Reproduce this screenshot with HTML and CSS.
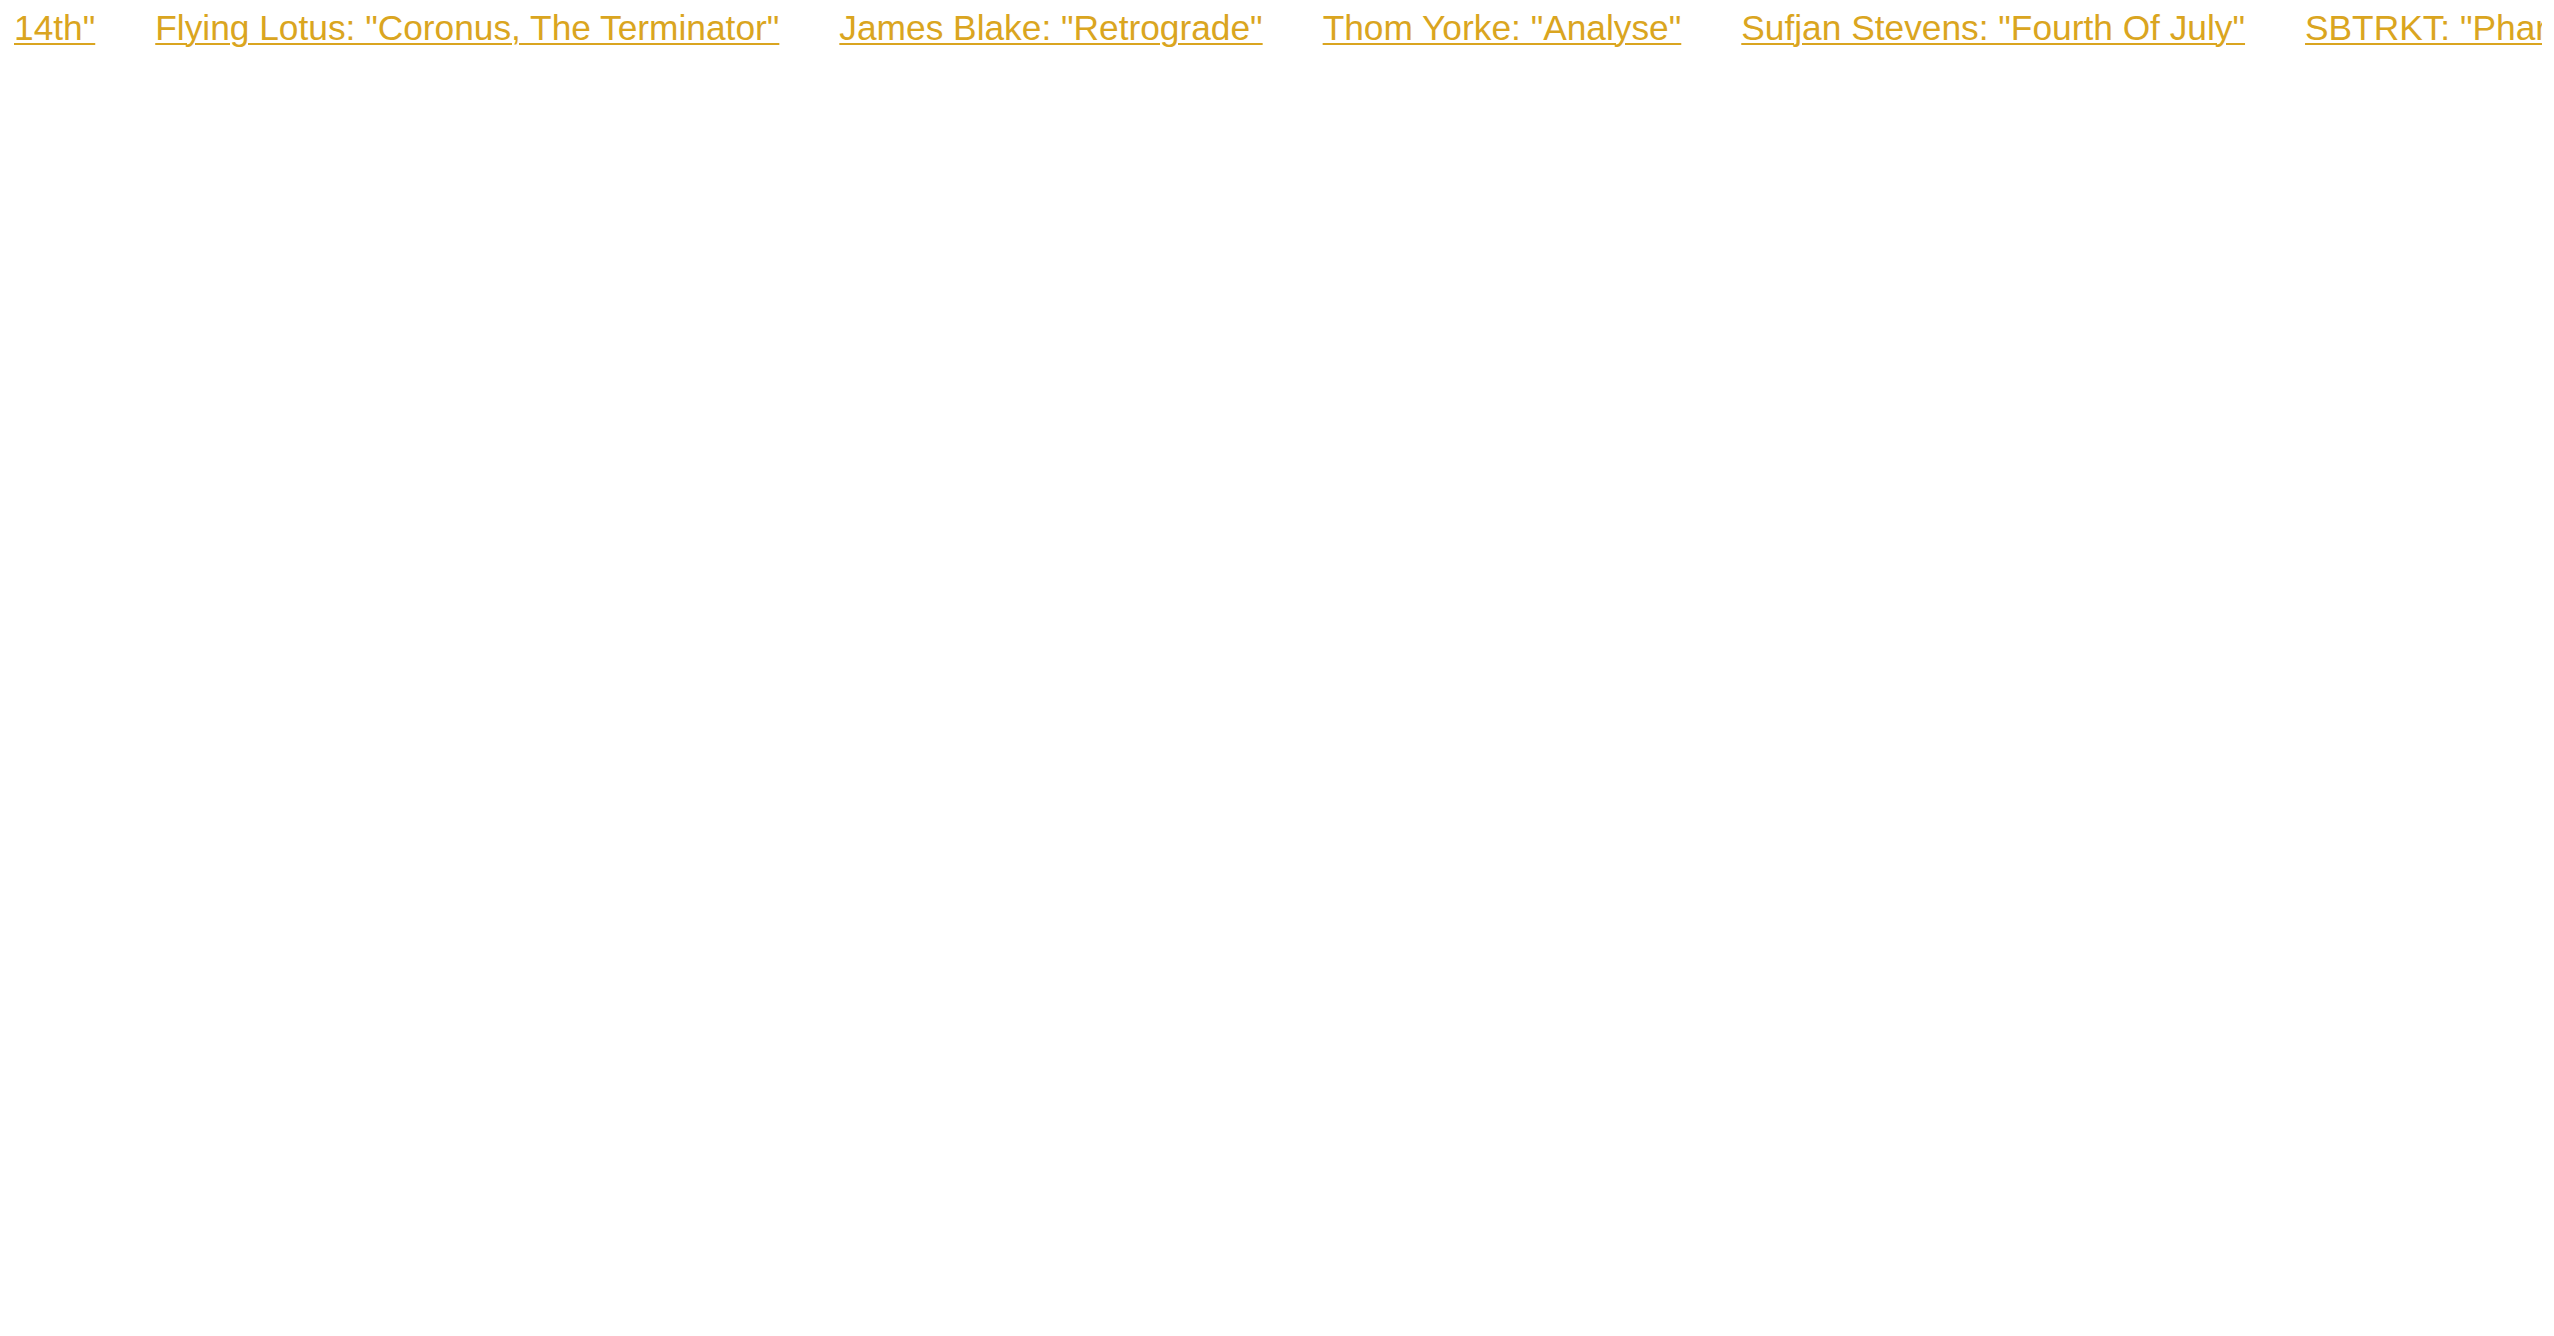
FILE: index.html
```html
<!DOCTYPE html>
<html lang="en">
<head>
<meta charset="utf-8">
<title>Playlist ticker</title>
<link rel="stylesheet" href="styles.css">
</head>
<body>
<div class="ticker">
  <ul class="track">
    <li><a class="song" href="#">14th"</a></li>
    <li><a class="song" href="#">Flying Lotus: "Coronus, The Terminator"</a></li>
    <li><a class="song" href="#">James Blake: "Retrograde"</a></li>
    <li><a class="song" href="#">Thom Yorke: "Analyse"</a></li>
    <li><a class="song" href="#">Sufjan Stevens: "Fourth Of July"</a></li>
    <li><a class="song" href="#">SBTRKT: "Pharaohs"</a></li>
  </ul>
</div>
</body>
</html>
```
FILE: styles.css
```css
html, body {
  margin: 0;
  padding: 0;
  background: #ffffff;
}

.ticker {
  margin: 0 12px 0 14px;
  padding-top: 7px;
  overflow: hidden;
  white-space: nowrap;
}

.track {
  list-style: none;
  margin: 0;
  padding: 0;
  display: flex;
  gap: 60px;
}

.track li {
  flex: none;
}

.song {
  font-family: "Liberation Sans", Arial, sans-serif;
  font-size: 35.3px;
  line-height: 41px;
  color: #daa520;
  text-decoration: underline;
  text-decoration-thickness: 2px;
  text-underline-offset: 3px;
}
```
